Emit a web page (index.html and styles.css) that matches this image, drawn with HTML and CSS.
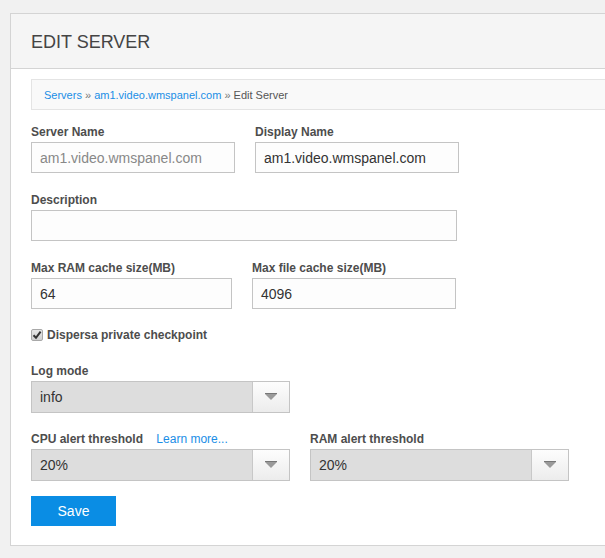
FILE: index.html
```html
<!DOCTYPE html>
<html>
<head>
<meta charset="utf-8">
<link rel="stylesheet" href="styles.css">
</head>
<body>
<div class="panel">
  <div class="panel-header">
    <h1 class="title">EDIT SERVER</h1>
  </div>
  <div class="panel-body">
    <div class="breadcrumb">
      <a href="#" class="crumb-link">Servers</a> <span class="sep">»</span> <a href="#" class="crumb-link">am1.video.wmspanel.com</a> <span class="sep">»</span> <span class="crumb-current">Edit Server</span>
    </div>

    <div class="row">
      <div class="field w204">
        <label class="label">Server Name</label>
        <div class="input disabled">am1.video.wmspanel.com</div>
      </div>
      <div class="field w204">
        <label class="label">Display Name</label>
        <div class="input">am1.video.wmspanel.com</div>
      </div>
    </div>

    <div class="row">
      <div class="field w426">
        <label class="label">Description</label>
        <div class="input"></div>
      </div>
    </div>

    <div class="row">
      <div class="field w201">
        <label class="label">Max RAM cache size(MB)</label>
        <div class="input">64</div>
      </div>
      <div class="field w204">
        <label class="label">Max file cache size(MB)</label>
        <div class="input">4096</div>
      </div>
    </div>

    <div class="check-row">
      <span class="checkbox"><svg class="check" viewBox="0 0 10 10" width="10" height="10"><path d="M1.5 5.2 L4 7.8 L8.6 1.6" fill="none" stroke="#333" stroke-width="2"/></svg></span>
      <span class="check-label">Dispersa private checkpoint</span>
    </div>

    <div class="row row-tight">
      <div class="field w259">
        <label class="label">Log mode</label>
        <div class="select">
          <span class="select-value">info</span>
          <span class="select-btn"><span class="arrow"></span></span>
        </div>
      </div>
    </div>

    <div class="row">
      <div class="field w259">
        <label class="label">CPU alert threshold <a href="#" class="learn">Learn more...</a></label>
        <div class="select">
          <span class="select-value">20%</span>
          <span class="select-btn"><span class="arrow"></span></span>
        </div>
      </div>
      <div class="field w259">
        <label class="label">RAM alert threshold</label>
        <div class="select">
          <span class="select-value">20%</span>
          <span class="select-btn"><span class="arrow"></span></span>
        </div>
      </div>
    </div>

    <button class="save">Save</button>
  </div>
</div>
</body>
</html>
```

FILE: styles.css
```css
html, body {
  margin: 0;
  padding: 0;
}
body {
  background: #f1f1f1;
  font-family: "Liberation Sans", Arial, sans-serif;
  overflow: hidden;
  width: 605px;
  height: 558px;
}
.panel {
  margin: 13px 0 0 10px;
  background: #fff;
  border: 1px solid #d4d4d4;
  border-right: none;
}
.panel-header {
  background: #f5f5f5;
  border-bottom: 1px solid #d4d4d4;
  height: 54px;
  padding-left: 20px;
  display: flex;
  align-items: center;
}
.title {
  margin: 0;
  font-size: 18px;
  font-weight: normal;
  color: #444;
  line-height: 20px;
  padding-top: 1px;
}
.panel-body {
  padding: 10px 0 19px 20px;
}
.breadcrumb {
  background: #f9f9f9;
  border: 1px solid #e4e4e4;
  border-right: none;
  height: 29px;
  line-height: 31px;
  padding-left: 12px;
  font-size: 11px;
  color: #666;
  margin-bottom: 13px;
}
.crumb-link {
  color: #1a8ee6;
  text-decoration: none;
}
.sep {
  color: #777;
}
.crumb-current {
  color: #555;
}
.row {
  display: flex;
  gap: 20px;
  margin-bottom: 18px;
}
.row-tight {
  margin-bottom: 17px;
}
.field {
  display: flex;
  flex-direction: column;
}
.w204 { width: 204px; }
.w201 { width: 201px; }
.w426 { width: 426px; }
.w259 { width: 259px; }
.label {
  display: block;
  font-size: 12px;
  font-weight: bold;
  color: #4d4d4d;
  line-height: 16px;
  padding-top: 1px;
  margin-bottom: 2px;
  white-space: nowrap;
}
.learn {
  font-weight: normal;
  color: #1a8ee6;
  text-decoration: none;
  margin-left: 10px;
}
.input {
  box-sizing: border-box;
  height: 31px;
  border: 1px solid #c4c4c4;
  background: #fdfdfd;
  font-size: 14px;
  color: #333;
  line-height: 30px;
  padding-left: 8px;
}
.input.disabled {
  color: #888;
}
.check-row {
  display: flex;
  align-items: center;
  height: 16px;
  margin-top: 1px;
  margin-bottom: 19px;
}
.checkbox {
  box-sizing: border-box;
  width: 12px;
  height: 12px;
  margin-right: 4px;
  margin-top: -1px;
  border: 1px solid #a8a8a8;
  border-radius: 2px;
  background: linear-gradient(#e6e6e6, #d0d0d0);
  display: flex;
  align-items: center;
  justify-content: center;
}
.check {
  display: block;
}
.check-label {
  font-size: 12px;
  font-weight: bold;
  color: #4d4d4d;
}
.select {
  box-sizing: border-box;
  height: 32px;
  border: 1px solid #c4c4c4;
  background: #dddddd;
  display: flex;
}
.select-value {
  flex: 1;
  font-size: 14px;
  color: #333;
  line-height: 31px;
  padding-left: 8px;
}
.select-btn {
  width: 36px;
  border-left: 1px solid #c8c8c8;
  background: linear-gradient(#fdfdfd, #ececec);
  display: flex;
  align-items: center;
  justify-content: center;
}
.arrow {
  width: 0;
  height: 0;
  border-left: 6px solid transparent;
  border-right: 6px solid transparent;
  border-top: 6px solid #9a9a9a;
  box-shadow: 0 -1px 0 #777;
}
.save {
  display: block;
  width: 85px;
  height: 30px;
  margin-top: -3px;
  border: none;
  background: #0a8de4;
  color: #fff;
  font-family: "Liberation Sans", Arial, sans-serif;
  font-size: 14px;
  padding: 0;
  cursor: pointer;
}
```
